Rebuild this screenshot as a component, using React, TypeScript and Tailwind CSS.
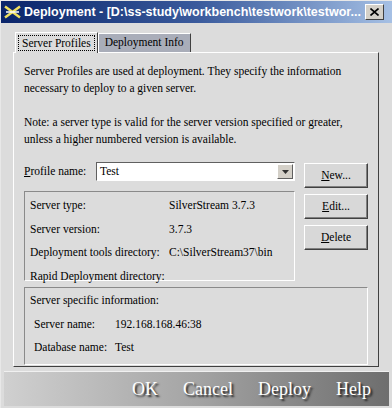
const serif = { fontFamily: '"Liberation Serif", "Times New Roman", serif' }

function Btn({ label }: { label: string }) {
  return (
    <button className="w-[64px] h-[25px] bg-[#d8d8d8] border border-t-white border-l-white border-r-[#404040] border-b-[#404040] shadow-[inset_-1px_-1px_0_#808080] text-[11.5px] text-black">
      <span className="underline">{label.slice(0, 1)}</span>
      {label.slice(1)}
    </button>
  )
}

function Sunken({ className, children }: { className: string; children: React.ReactNode }) {
  return (
    <div className={`border border-t-[#8a8a8a] border-l-[#8a8a8a] border-r-white border-b-white ${className}`}>
      {children}
    </div>
  )
}

export default function App() {
  const details = [
    ['Server type:', 'SilverStream 3.7.3'],
    ['Server version:', '3.7.3'],
    ['Deployment tools directory:', 'C:\\SilverStream37\\bin'],
    ['Rapid Deployment directory:', ''],
  ]

  return (
    <div className="w-[392px] h-[408px] bg-[#dcdcdc] flex flex-col border-l border-t border-l-[#e8e8e8] border-t-[#e8e8e8] overflow-hidden" style={serif}>
      {/* Title bar */}
      <div className="h-[22px] shrink-0 flex items-center pl-[3px] pr-[8px] bg-gradient-to-r from-[#0a246a] via-[#3a5a9c] to-[#a6c0e4]">
        <svg width="17" height="14" viewBox="0 0 17 14" className="mr-[3px] shrink-0">
          <path d="M1 1.5 L16 12.5 M16 1.5 L1 12.5" stroke="#f0e060" strokeWidth="2.5" />
          <path d="M2 7 H15" stroke="#ffffff" strokeWidth="1.5" />
        </svg>
        <span className="text-white font-bold text-[12.5px] flex-1 min-w-0 overflow-hidden whitespace-nowrap" style={{ fontFamily: '"Liberation Sans", Arial, sans-serif' }}>
          Deployment - [D:\ss-study\workbench\testwork\testwor...
        </span>
        <div className="w-[19px] h-[16px] shrink-0 bg-[#d4d0c8] border border-t-white border-l-white border-r-[#404040] border-b-[#404040] flex items-center justify-center">
          <svg width="9" height="8" viewBox="0 0 9 8">
            <path d="M0.5 0.5 L8.5 7.5 M8.5 0.5 L0.5 7.5" stroke="#000" strokeWidth="1.6" />
          </svg>
        </div>
      </div>

      {/* Tabs */}
      <div className="flex items-end pl-[14px] h-[29px] shrink-0 text-[11.5px]">
        <div className="h-[21px] px-[2px] border border-b-0 border-t-white border-l-white border-r-[#404040] bg-[#dcdcdc] relative top-[1px] flex items-center">
          <span className="border border-dotted border-black px-[3px] leading-[14px]">Server Profiles</span>
        </div>
        <div className="h-[19px] px-[6px] border border-b-0 border-t-white border-l-white border-r-[#404040] bg-[#a9adb9] flex items-center">
          Deployment Info
        </div>
      </div>

      {/* Tab panel */}
      <div className="ml-[12px] mr-[13px] h-[315px] shrink-0 border border-t-white border-l-white border-r-[#404040] border-b-[#404040] px-[10px] pt-[10px] text-[11.5px] text-black leading-[17px]">
        <p>Server Profiles are used at deployment. They specify the information necessary to deploy to a given server.</p>
        <p className="mt-[17px]">Note: a server type is valid for the server version specified or greater, unless a higher numbered version is available.</p>

        <div className="flex mt-[14px] gap-[9px]">
          <div className="w-[271px]">
            <div className="flex items-center h-[19px]">
              <span className="w-[72px] whitespace-nowrap">
                <span className="underline">P</span>rofile name:
              </span>
              <div className="flex-1 h-[19px] bg-white border border-t-[#606060] border-l-[#606060] border-r-white border-b-white flex items-center pl-[3px]">
                <span className="flex-1">Test</span>
                <div className="w-[16px] h-[15px] bg-[#d4d0c8] border border-t-white border-l-white border-r-[#606060] border-b-[#606060] flex items-center justify-center mr-[1px]">
                  <svg width="7" height="4" viewBox="0 0 7 4">
                    <path d="M0 0 H7 L3.5 4 Z" fill="#303030" />
                  </svg>
                </div>
              </div>
            </div>
            <Sunken className="mt-[10px] h-[90px] px-[5px] pt-[2px]">
              {details.map(([k, v]) => (
                <div key={k} className="flex h-[23.5px] items-center whitespace-nowrap">
                  <span className="w-[139px]">{k}</span>
                  <span>{v}</span>
                </div>
              ))}
            </Sunken>
          </div>
          <div className="flex flex-col gap-[6px] pt-[1px]">
            <Btn label="New..." />
            <Btn label="Edit..." />
            <Btn label="Delete" />
          </div>
        </div>

        <Sunken className="mt-[6px] h-[78px] pl-[5px] pt-[4px]">
          <div>Server specific information:</div>
          <div className="flex pl-[4px] mt-[7px] whitespace-nowrap">
            <span className="w-[81px]">Server name:</span>
            <span>192.168.168.46:38</span>
          </div>
          <div className="flex pl-[4px] mt-[6px] whitespace-nowrap">
            <span className="w-[81px]">Database name:</span>
            <span>Test</span>
          </div>
        </Sunken>
      </div>

      {/* Bottom bar */}
      <div className="mt-[4px] mx-[3px] h-[35px] shrink-0 bg-gradient-to-r from-[#d0d0d0] via-[#a4a4a4] to-[#6e6e6e] border-t border-t-[#f0f0f0] flex items-center justify-end pr-[18px] gap-[25px] text-white text-[18px] [text-shadow:2px_2px_2px_#202020]">
        <span>OK</span>
        <span>Cancel</span>
        <span>Deploy</span>
        <span>Help</span>
      </div>
    </div>
  )
}
